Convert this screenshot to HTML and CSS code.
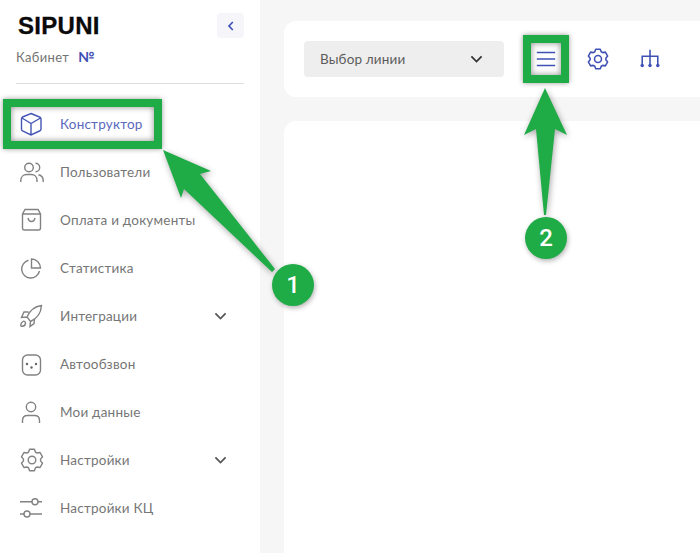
FILE: index.html
```html
<!DOCTYPE html>
<html lang="ru">
<head>
<meta charset="utf-8">
<title>SIPUNI</title>
<link rel="stylesheet" href="styles.css">
</head>
<body>
<div class="app">
  <aside class="sidebar">
    <div class="brand">
      <div class="brand-top">
        <div class="logo">SIPUNI</div>
        <button class="collapse" type="button" aria-label="Свернуть">
          <svg width="8" height="10" viewBox="0 0 8 10"><path d="M5.800 1 2 5l3.800 4" fill="none" stroke="#3f51b5" stroke-width="1.700"/></svg>
        </button>
      </div>
      <div class="cabinet">Кабинет <b class="num">№</b></div>
    </div>
    <nav class="menu">
      <a class="item active">
        <svg class="ico" viewBox="0 0 24 24"><path d="M11 1.500 19.500 5a2 2 0 0 1 1.500 2v10a2 2 0 0 1-1.500 2L11 23 2.500 19A2 2 0 0 1 1.500 17V7A2 2 0 0 1 2.500 5zM2 6l9 5.500L20.500 6M11 11.500V23"/></svg>
        <span class="label">Конструктор</span>
      </a>
      <a class="item">
        <svg class="ico" viewBox="0 0 24 24"><circle cx="9" cy="7.500" r="4.300"/><path d="M15.500 3.300a4.200 4.200 0 0 1 0 8.400"/><path d="M.8 22v-1.500c0-3.500 2.500-6 6-6h4.500c3.500 0 5.700 2.500 5.700 6V22"/><path d="M18.500 14.800c2.500.6 4.700 2.700 4.700 5.700V22"/></svg>
        <span class="label">Пользователи</span>
      </a>
      <a class="item">
        <svg class="ico" viewBox="0 0 24 24"><path d="M2.500 6 5 1.500h13L20.500 6v14a2 2 0 0 1-2 2h-14a2 2 0 0 1-2-2zM2.500 6h18M8 10c.5 2.500 2 3.500 3.500 3.500s3-1 3.500-3.500"/></svg>
        <span class="label">Оплата и документы</span>
      </a>
      <a class="item">
        <svg class="ico" viewBox="0 0 24 24"><path d="M8.500 4.300A9 9 0 1 0 19.500 15"/><path d="M11.500 3a9 9 0 0 1 9 9h-9z"/></svg>
        <span class="label">Статистика</span>
      </a>
      <a class="item">
        <svg class="ico" viewBox="0 0 24 24"><path d="M21.500 1.500C14 2.500 9.500 7 7 13l3.500 4.500C17 14.500 21 9 21.500 1.500zM8.500 8H4L1.500 13.500 7 13M14.500 15l-.5 4.500-4 3 .5-5"/><path d="M3 17.500c-1.500 1-2.500 3-2 4.500 2 .5 4-.5 4.500-2.500.2-1.500-1.500-3-2.500-2z"/></svg>
        <span class="label">Интеграции</span>
        <svg class="chev" viewBox="0 0 14 9"><path d="M1.500 1.500 7 7l5.500-5.500"/></svg>
      </a>
      <a class="item">
        <svg class="ico" viewBox="0 0 24 24"><rect x="2.500" y="3" width="18" height="20" rx="5"/><circle class="dot" cx="7" cy="12" r="1.200"/><circle class="dot" cx="16" cy="12" r="1.200"/><circle class="dot" cx="11.500" cy="15.500" r="1.200"/></svg>
        <span class="label">Автообзвон</span>
      </a>
      <a class="item">
        <svg class="ico" viewBox="0 0 24 24"><circle cx="11" cy="7" r="4.700"/><path d="M2.500 23v-2.500c0-3 2-5 5-5h7c3 0 5 2 5 5V23"/></svg>
        <span class="label">Мои данные</span>
      </a>
      <a class="item">
        <svg class="ico" viewBox="0 0 24 24"><circle cx="12" cy="12" r="3.800"/><path class="gear" d="M8.500 4.140 9.530 1.280h4.940l1.030 2.860 1.560.9 2.990-.54 2.470 4.280-1.960 2.320v1.800l1.960 2.320-2.470 4.280-2.990-.54-1.560.9-1.030 2.860H9.530L8.500 19.860l-1.560-.9-2.990.54-2.470-4.280 1.960-2.320v-1.800L1.480 8.780 3.950 4.500l2.990.54z"/></svg>
        <span class="label">Настройки</span>
        <svg class="chev" viewBox="0 0 14 9"><path d="M1.500 1.500 7 7l5.500-5.500"/></svg>
      </a>
      <a class="item">
        <svg class="ico" viewBox="0 0 24 24"><path d="M0 5.700h12M18 5.700h4M0 18h4M10 18h12"/><circle cx="15" cy="5.700" r="3"/><circle cx="7" cy="18" r="3"/></svg>
        <span class="label">Настройки КЦ</span>
      </a>
    </nav>
  </aside>
  <main class="content">
    <section class="toolbar">
      <div class="select">
        <span>Выбор линии</span>
        <svg class="select-chev" viewBox="0 0 14 9"><path d="M1.500 1.500 7 7l5.500-5.500"/></svg>
      </div>
      <div class="tools">
        <svg class="tool" viewBox="0 0 24 24"><path d="M2 5h20M2 12h20M2 19h20"/></svg>
        <svg class="tool" viewBox="0 0 24 24"><circle cx="12" cy="12" r="3.800"/><path class="gear" d="M8.500 4.140 9.530 1.280h4.940l1.030 2.860 1.560.9 2.990-.54 2.470 4.280-1.960 2.320v1.800l1.960 2.320-2.470 4.280-2.990-.54-1.560.9-1.030 2.860H9.530L8.500 19.860l-1.560-.9-2.990.54-2.470-4.280 1.960-2.320v-1.800L1.480 8.780 3.950 4.500l2.990.54z"/></svg>
        <svg class="tool" viewBox="0 0 24 24"><path d="M12 2v16M3.500 18V9h17v9"/><circle class="fill" cx="3.500" cy="19" r="1.900"/><circle class="fill" cx="12" cy="19" r="1.900"/><circle class="fill" cx="20.500" cy="19" r="1.900"/></svg>
      </div>
    </section>
    <section class="panel"></section>
  </main>
</div>
<div class="mark mark-one"></div>
<div class="mark mark-two"></div>
<svg class="arrows" viewBox="0 0 700 553" width="700" height="553">
  <path d="M163 150 211 171 200 174 275 269 272 272 184 189 181 198z"/>
  <path d="M545 88 567 135 555 129 546 215H544L536 129 524 135z"/>
</svg>
<div class="badge badge-one">1</div>
<div class="badge badge-two">2</div>
</body>
</html>
```
FILE: styles.css
```css
* { box-sizing: border-box; }
html, body { margin: 0; height: 100%; }
body {
  width: 700px;
  height: 553px;
  overflow: hidden;
  position: relative;
  background: #f6f6f6;
  font-family: Lato, "Noto Sans", sans-serif;
}
.app { display: flex; height: 553px; }
.sidebar { width: 260px; flex: none; background: #fff; padding: 13px 16px 0; }
.brand { height: 71px; border-bottom: 1px solid #dedede; }
.brand-top { display: flex; justify-content: space-between; align-items: flex-start; height: 25px; padding-left: 2px; }
.logo { font: 700 24px/26px "Liberation Sans", sans-serif; letter-spacing: .3px; color: #0a0a0a; -webkit-text-stroke: .3px #0a0a0a; }
.collapse {
  width: 27px; height: 25px; padding: 0; border: 0; border-radius: 4px;
  background: #f6f6fa; display: flex; align-items: center; justify-content: center;
}
.cabinet { margin-top: 10px; font-size: 13px; line-height: 17px; color: #747474; letter-spacing: .35px; }
.num { color: #3f51b5; margin-left: 5px; font-size: 14px; }
.menu { display: flex; flex-direction: column; margin-top: 16px; margin-left: 4px; }
.item { height: 48px; display: flex; align-items: center; color: #767676; font-size: 13.500px; letter-spacing: .22px; position: relative; }
.ico { width: 24px; height: 24px; flex: none; fill: none; stroke: #828282; stroke-width: 1.400; }
.ico .dot { fill: #666; stroke: none; }
.gear { stroke-linejoin: round; }
.label { margin-left: 16px; flex: 1; white-space: nowrap; }
.active { color: #5a68bd; }
.active .ico { stroke: #4455b5; }
.chev { width: 13px; height: 8.400px; margin-right: 17px; fill: none; stroke: #555; stroke-width: 1.900; }
.content { flex: 1; padding: 21px 0 0 24px; display: flex; flex-direction: column; gap: 24px; min-width: 0; }
.toolbar {
  height: 76px; background: #fff; border-radius: 12px 0 0 12px;
  display: flex; align-items: center; padding-left: 20px;
}
.select {
  width: 200px; height: 36px; background: #eee; border-radius: 4px; padding: 0 21px 0 16px;
  display: flex; align-items: center; justify-content: space-between;
  font-size: 13.500px; letter-spacing: .15px; color: #5c5c5c;
}
.select-chev { width: 13px; height: 8.400px; fill: none; stroke: #333; stroke-width: 1.900; }
.tools { display: flex; gap: 30px; margin-left: 31px; }
.tool { width: 22px; height: 22px; fill: none; stroke: #3f51b5; stroke-width: 1.700; }
.tool .fill { fill: #3f51b5; stroke: none; }
.panel { flex: 1; background: #fff; border-radius: 12px 0 0 0; }
.mark { position: absolute; border: 8px solid #1fab45; box-shadow: 0 0 5px rgba(0,0,0,.4), inset 0 0 6px rgba(0,0,0,.45); }
.mark-one { left: 3px; top: 99px; width: 159px; height: 50px; }
.mark-two { left: 523px; top: 35px; width: 46px; height: 48px; }
.arrows { position: absolute; left: 0; top: 0; fill: #1fab45; filter: drop-shadow(1px 2px 3px rgba(0,0,0,.35)); }
.badge {
  position: absolute; width: 42px; height: 42px; border-radius: 50%;
  background: #1fab45; color: #fff; box-shadow: 1px 2px 5px rgba(0,0,0,.3);
  font: 500 24px/42px Roboto, sans-serif; text-align: center;
}
.badge-one { left: 272px; top: 264px; }
.badge-two { left: 525px; top: 217px; }
```
